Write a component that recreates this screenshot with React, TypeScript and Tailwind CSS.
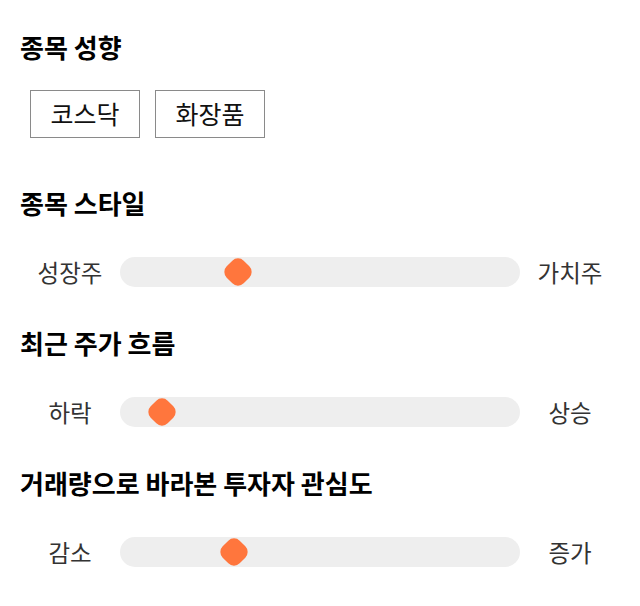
import React from 'react';

const font = { fontFamily: '"Noto Sans CJK KR", "Noto Sans", sans-serif' };

interface SliderRowProps {
  left: string;
  right: string;
  value: number;
}

const SliderRow: React.FC<SliderRowProps> = ({ left, right, value }) => (
  <div className="flex items-center h-[30px]">
    <span className="w-[100px] text-center text-[23.5px] leading-[30px] text-[#333333]">{left}</span>
    <div className="relative flex-1 h-[30px] rounded-full bg-[#eeeeee]">
      <div
        className="absolute top-1/2 w-[24px] h-[24px] -translate-x-1/2 -translate-y-1/2 rotate-45 rounded-[8px] bg-[#ff763d]"
        style={{ left: `${value}%` }}
      />
    </div>
    <span className="w-[100px] text-center text-[23.5px] leading-[30px] text-[#333333]">{right}</span>
  </div>
);

const Heading: React.FC<{ children: React.ReactNode }> = ({ children }) => (
  <h2 className="text-[26px] font-bold text-black leading-[30px]">{children}</h2>
);

export default function App() {
  return (
    <div className="w-[640px] h-[606px] bg-white px-[20px] pt-[32px]" style={font}>
      <Heading>종목 성향</Heading>
      <div className="flex gap-[15px] mt-[28px] pl-[10px]">
        <button className="w-[110px] h-[48px] border border-[#8a8a8a] text-[25px] text-[#111111]">코스닥</button>
        <button className="w-[110px] h-[48px] border border-[#8a8a8a] text-[25px] text-[#111111]">화장품</button>
      </div>
      <div className="mt-[50px]">
        <Heading>종목 스타일</Heading>
      </div>
      <div className="mt-[39px]">
        <SliderRow left="성장주" right="가치주" value={29.4} />
      </div>
      <div className="mt-[41px]">
        <Heading>최근 주가 흐름</Heading>
      </div>
      <div className="mt-[39px]">
        <SliderRow left="하락" right="상승" value={10.6} />
      </div>
      <div className="mt-[41px]">
        <Heading>거래량으로 바라본 투자자 관심도</Heading>
      </div>
      <div className="mt-[39px]">
        <SliderRow left="감소" right="증가" value={28.5} />
      </div>
    </div>
  );
}
